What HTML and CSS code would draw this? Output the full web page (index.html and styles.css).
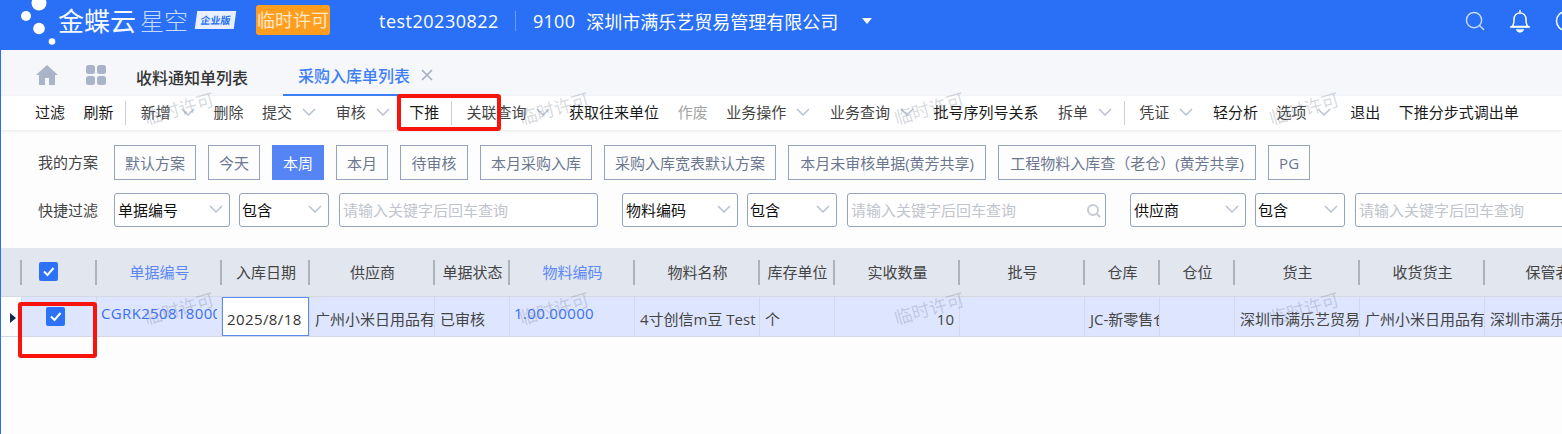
FILE: index.html
```html
<!DOCTYPE html>
<html lang="zh-CN">
<head>
<meta charset="utf-8">
<title>采购入库单列表</title>
<link rel="stylesheet" href="styles.css">
</head>
<body>
<div class="page">
  <header class="topbar">
    <svg class="logo-dots" width="58" height="50" viewBox="0 0 58 50"><circle cx="39" cy="3" r="7.5" fill="#fff"/><circle cx="26" cy="16" r="5" fill="#fff"/><circle cx="39" cy="28.500" r="5.800" fill="#fff"/><circle cx="52" cy="41.500" r="3.300" fill="#fff"/></svg>
    <span class="brand">金蝶云</span>
    <span class="brand-sub">星空</span>
    <span class="edition">企业版</span>
    <span class="license">临时许可</span>
    <span class="user">test20230822</span>
    <span class="top-sep"></span>
    <span class="org-code">9100</span>
    <span class="org-name">深圳市满乐艺贸易管理有限公司</span>
    <svg class="org-caret" width="10" height="6" viewBox="0 0 10 6"><path d="M0 0h10L5 6z" fill="#fff"/></svg>
    <span class="top-actions">
      <svg width="20" height="20" viewBox="0 0 21 21" fill="none" stroke="#c9dcff" stroke-width="1.500"><circle cx="9.500" cy="9.500" r="8"/><path d="M15.500 15.500l4 4" stroke-linecap="round"/></svg>
      <svg width="22" height="24" viewBox="0 0 22 24" fill="none" stroke="#fff" stroke-width="1.500"><path d="M3 17.500c2-2 2-4 2-7 0-4 2.500-6.500 6-6.500s6 2.500 6 6.500c0 3 0 5 2 7z" stroke-linejoin="round"/><path d="M1.500 18h19" stroke-linecap="round"/><path d="M11 1v2.500"/><path d="M8 21h6c-1 2.500-5 2.500-6 0z" fill="#fff"/></svg>
      <svg width="22" height="22" viewBox="0 0 22 22" fill="none" stroke="#fff" stroke-width="1.500"><circle cx="11" cy="11" r="9.500"/><path d="M8 8.500c0-4 6-4 6 0 0 2.500-3 2.500-3 5" stroke-linecap="round"/><circle cx="11" cy="16.500" r=".8" fill="#fff"/></svg>
    </span>
  </header>

  <main class="main">
    <nav class="tabs">
      <svg class="tab-icon" width="22" height="20" viewBox="0 0 22 20"><path d="M11 0L0 10h3v10h6v-7h4v7h6V10h3z" fill="#aab4c9"/></svg>
      <svg class="tab-icon grid-icon" width="20" height="20" viewBox="0 0 20 20" fill="#aab4c9"><rect width="9" height="9" rx="2.500"/><rect x="11" width="9" height="9" rx="2.500"/><rect y="11" width="9" height="9" rx="2.500"/><rect x="11" y="11" width="9" height="9" rx="2.500"/></svg>
      <span class="tab">收料通知单列表</span>
      <span class="tab tab-active">采购入库单列表
        <svg class="tab-close" width="12" height="12" viewBox="0 0 12 12" stroke="#a3aec4" stroke-width="1.600"><path d="M1 1l10 10M11 1L1 11"/></svg>
      </span>
    </nav>

    <div class="toolbar">
      <span class="tool">过滤</span>
      <span class="tool">刷新</span>
      <span class="tool-sep"></span>
      <span class="tool tool-menu">新增<svg class="chev" viewBox="0 0 14 8"><path d="M1 1l6 6 6-6"/></svg></span>
      <span class="tool tool-soft tool-tight">删除</span>
      <span class="tool tool-menu">提交<svg class="chev" viewBox="0 0 14 8"><path d="M1 1l6 6 6-6"/></svg></span>
      <span class="tool tool-menu">审核<svg class="chev" viewBox="0 0 14 8"><path d="M1 1l6 6 6-6"/></svg></span>
      <span class="tool">下推</span>
      <span class="tool-sep"></span>
      <span class="tool tool-menu">关联查询<svg class="chev" viewBox="0 0 14 8"><path d="M1 1l6 6 6-6"/></svg></span>
      <span class="tool tool-tight">获取往来单位</span>
      <span class="tool tool-off">作废</span>
      <span class="tool tool-menu">业务操作<svg class="chev" viewBox="0 0 14 8"><path d="M1 1l6 6 6-6"/></svg></span>
      <span class="tool tool-menu">业务查询<svg class="chev" viewBox="0 0 14 8"><path d="M1 1l6 6 6-6"/></svg></span>
      <span class="tool">批号序列号关系</span>
      <span class="tool tool-menu tool-wide">拆单<svg class="chev" viewBox="0 0 14 8"><path d="M1 1l6 6 6-6"/></svg></span>
      <span class="tool-sep"></span>
      <span class="tool tool-menu">凭证<svg class="chev" viewBox="0 0 14 8"><path d="M1 1l6 6 6-6"/></svg></span>
      <span class="tool">轻分析</span>
      <span class="tool tool-menu">选项<svg class="chev" viewBox="0 0 14 8"><path d="M1 1l6 6 6-6"/></svg></span>
      <span class="tool">退出</span>
      <span class="tool">下推分步式调出单</span>
    </div>

    <section class="filters">
      <div class="filter-row scheme-row">
        <span class="filter-label">我的方案</span>
        <span class="chip">默认方案</span>
        <span class="chip">今天</span>
        <span class="chip chip-active">本周</span>
        <span class="chip">本月</span>
        <span class="chip chip-68">待审核</span>
        <span class="chip">本月采购入库</span>
        <span class="chip">采购入库宽表默认方案</span>
        <span class="chip chip-198">本月未审核单据(黄芳共享)</span>
        <span class="chip chip-258">工程物料入库查（老仓）(黄芳共享)</span>
        <span class="chip chip-42">PG</span>
      </div>
      <div class="filter-row quick-row">
        <span class="filter-label">快捷过滤</span>
        <span class="field field-key">单据编号<svg class="chev" viewBox="0 0 14 8"><path d="M1 1l6 6 6-6"/></svg></span>
        <span class="field field-op">包含<svg class="chev" viewBox="0 0 14 8"><path d="M1 1l6 6 6-6"/></svg></span>
        <span class="field field-text">请输入关键字后回车查询</span>
        <span class="field field-key">物料编码<svg class="chev" viewBox="0 0 14 8"><path d="M1 1l6 6 6-6"/></svg></span>
        <span class="field field-op">包含<svg class="chev" viewBox="0 0 14 8"><path d="M1 1l6 6 6-6"/></svg></span>
        <span class="field field-text">请输入关键字后回车查询<svg class="field-search" width="14" height="14" viewBox="0 0 14 14" fill="none" stroke="#c5cad6" stroke-width="2"><circle cx="6" cy="6" r="5"/><path d="M9.500 9.500l3.500 3.500"/></svg></span>
        <span class="field field-key">供应商<svg class="chev" viewBox="0 0 14 8"><path d="M1 1l6 6 6-6"/></svg></span>
        <span class="field field-op">包含<svg class="chev" viewBox="0 0 14 8"><path d="M1 1l6 6 6-6"/></svg></span>
        <span class="field field-text field-last">请输入关键字后回车查询</span>
      </div>
    </section>

    <div class="grid-head">
      <span></span>
      <span class="th th-check"><span class="check"><svg viewBox="0 0 19 19"><path d="M5 9.500l3.500 3.500L14.500 6"/></svg></span></span>
      <span class="th th-link">单据编号</span>
      <span class="th">入库日期</span>
      <span class="th">供应商</span>
      <span class="th">单据状态</span>
      <span class="th th-link">物料编码</span>
      <span class="th">物料名称</span>
      <span class="th">库存单位</span>
      <span class="th">实收数量</span>
      <span class="th">批号</span>
      <span class="th">仓库</span>
      <span class="th">仓位</span>
      <span class="th">货主</span>
      <span class="th">收货货主</span>
      <span class="th">保管者</span>
    </div>
    <div class="grid-row">
      <span class="row-mark"><svg width="6" height="10" viewBox="0 0 6 10"><path d="M0 0l6 5-6 5z" fill="#14284f"/></svg></span>
      <span class="td td-check"><span class="check"><svg viewBox="0 0 19 19"><path d="M5 9.500l3.500 3.500L14.500 6"/></svg></span></span>
      <span class="td td-link"><span class="td-clip">CGRK2508180001</span></span>
      <span class="td td-edit"><span class="date-box">2025/8/18</span></span>
      <span class="td">广州小米日用品有限公司</span>
      <span class="td">已审核</span>
      <span class="td td-link"><span class="td-clip">1.00.00000</span></span>
      <span class="td">4寸创信m豆 Test</span>
      <span class="td">个</span>
      <span class="td td-num">10</span>
      <span class="td"></span>
      <span class="td">JC-新零售仓</span>
      <span class="td"></span>
      <span class="td">深圳市满乐艺贸易管理</span>
      <span class="td">广州小米日用品有限公司</span>
      <span class="td">深圳市满乐艺贸易</span>
    </div>
  </main>

  <div class="watermarks">
    <span>临时许可</span><span>临时许可</span><span>临时许可</span><span>临时许可</span>
    <span>临时许可</span><span>临时许可</span><span>临时许可</span><span>临时许可</span>
  </div>
  <div class="mark mark-push"></div>
  <div class="mark mark-check"></div>
</div>
</body>
</html>
```
FILE: styles.css
```css
* { box-sizing: border-box; }
html, body { margin: 0; padding: 0; }
body {
  font-family: "Open Sans", "Noto Sans CJK SC", sans-serif;
  font-size: 15px;
  color: #333;
  background: #fdfdfe;
}
.page { position: relative; width: 1562px; height: 434px; overflow: hidden; }

/* top bar */
.topbar { height: 50px; background: #2970f6; display: flex; align-items: center; color: #fff; overflow: hidden; white-space: nowrap; }
.topbar > * { flex: none; }
.brand { font-size: 26px; font-weight: 400; line-height: 1; margin-top: -9px; color: #f4f8ff; }
.brand-sub { font-size: 24px; font-weight: 300; line-height: 1; margin: -9px 0 0 4px; color: #c7dafd; }
.edition { width: 39px; height: 18px; margin: -10px 0 0 8px; background: #e8f0ff; color: #2970f6; font-size: 10px; font-weight: 700; line-height: 18px; text-align: center; transform: skewX(-8deg); }
.license { width: 74px; height: 30px; margin: -10px 0 0 21px; background: #ff9d1e; color: #ffe8c8; border-radius: 3px; font-size: 18px; line-height: 30px; text-align: center; }
.user { font-size: 18px; margin: -8px 0 0 49px; letter-spacing: .5px; }
.top-sep { width: 1px; height: 20px; margin: -8px 0 0 16px; background: #6c9df8; }
.org-code { font-size: 18px; margin: -8px 0 0 17px; letter-spacing: .3px; }
.org-name { font-size: 18px; margin: -8px 0 0 11px; }
.org-caret { margin: -9px 0 0 24px; }
.top-actions { display: flex; align-items: center; gap: 24px; margin: -9px 0 0 593px; }

/* main */
.main { border-left: 1px solid #2970f6; height: 384px; }
.tabs { height: 46px; background: #f5f7fb; display: flex; align-items: center; padding: 6px 0 0 35px; }
.tab-icon { flex: none; margin-top: -2px; }
.grid-icon { margin-left: 28px; }
.tab { font-size: 16px; font-weight: 500; color: #333; margin-left: 30px; padding-top: 2px; }
.tab-active { color: #3f7ff5; margin-left: 35px; height: 40px; line-height: 40px; padding: 2px 12px 0 15px; border-bottom: 2px solid #3f7ff5; display: flex; align-items: center; gap: 11px; width: 165px; }
.tab-close { flex: none; margin-top: -3px; }

.toolbar { height: 34px; background: #fff; display: flex; align-items: center; gap: 18.600px; padding: 0 0 2px 34px; color: #111; box-shadow: 0 1px 3px rgba(60, 70, 90, .12); position: relative; white-space: nowrap; }
.tool { flex: none; line-height: 20px; color: #1a1a1a; }
.tool-menu { display: flex; align-items: center; gap: 10px; padding-right: 1px; color: #444; }
.tool-soft { color: #444; }
.tool-off { color: #a4a4a4; }
.tool-tight { margin-left: -1px; }
.tool-wide { margin: 0 -1px 0 1px; }
.tool-sep { width: 1px; height: 24px; background: #c8cfdc; flex: none; margin: 2px -4px 0 -7px; }
.chev { width: 14px; height: 8px; fill: none; stroke: #b9c1d2; stroke-width: 1.500; flex: none; }

/* filters */
.filters { padding: 15px 0 21px 37px; }
.filter-row { display: flex; align-items: center; white-space: nowrap; }
.scheme-row { height: 35px; gap: 12px; margin-bottom: 13px; }
.quick-row { height: 34px; }
.filter-label { width: 64px; flex: none; color: #444; padding-bottom: 2px; }
.quick-row .filter-label { width: 76px; }
.chip { height: 35px; padding: 0 10px; border: 1px solid #95a3bd; color: #6b778f; line-height: 34px; flex: none; text-align: center; }
.chip-active { background: #5585f5; border-color: #5585f5; color: #fff; width: 52px; }
.chip-68 { width: 68px; }
.chip-198 { width: 198px; }
.chip-258 { width: 258px; }
.chip-42 { width: 42px; }
.field { height: 34px; flex: none; border: 1px solid #95a3bd; border-radius: 3px; display: flex; align-items: center; justify-content: space-between; padding: 0 6px 2px 3px; color: #111; background: #fff; }
.field-key { width: 116px; margin-right: 9px; }
.field-op { width: 90px; margin-right: 10px; padding-left: 2px; }
.field-text { width: 259px; margin-right: 24px; color: #c0c4cc; padding: 0 4px 1px 3px; }
.field-search { flex: none; margin-top: 2px; }
.field-last { margin-right: 0; }

/* grid */
.grid-head, .grid-row { display: grid; }
.grid-head { grid-template-columns: 19px 75px 125px 88px 125px 75px 125px 125px 75px 125px 125px 75px 75px 125px 125px 126px; height: 49px; background: #e2e6ef; align-items: center; border-bottom: 1px solid #d5d9e3; }
.grid-row { grid-template-columns: 20px 75px 125px 88px 125px 75px 125px 125px 75px 125px 125px 75px 75px 125px 125px 125px; height: 40px; border-bottom: 1px solid #d5d9e3; }
.th { height: 25px; border-left: 2px solid #aeb2bb; display: flex; align-items: center; justify-content: center; color: #444; white-space: nowrap; overflow: hidden; padding: 0 0 1px 2px; }
.th-link { color: #5b88f5; }
.th-check { justify-content: flex-start; padding-left: 17px; }
.row-mark { display: flex; align-items: center; padding: 2px 0 0 9px; background: #fdfdfe; }
.td { background: #dee6ff; border-left: 1px solid #d3d9e8; padding: 6px 0 0 5px; line-height: 33px; color: #444; white-space: nowrap; overflow: hidden; }
.td-link { color: #3b6ff5; padding: 0 4px; letter-spacing: .35px; }
.td-clip { display: block; overflow: hidden; }
.td-num { text-align: right; padding-right: 5px; }
.td-check { padding: 10px 0 0 24px; line-height: 0; }
.td-edit { padding: 0; }
.date-box { display: block; height: 39px; background: #fff; border: 1px solid #5d8cf0; padding-left: 4px; line-height: 43px; color: #333; letter-spacing: .4px; }
.check { display: block; width: 19px; height: 19px; background: #2d72f6; border-radius: 2px; flex: none; }
.check svg { display: block; fill: none; stroke: #fff; stroke-width: 2; }

/* overlays */
.watermarks { position: absolute; left: 143px; top: 90px; display: grid; grid-template-columns: repeat(4, 375px); grid-auto-rows: 200px; pointer-events: none; }
.watermarks span { width: 75px; height: 36px; line-height: 36px; font-size: 18px; color: rgba(110, 120, 140, .28); transform: rotate(-16deg); white-space: nowrap; }
.mark { position: absolute; border: 4px solid #f8140c; border-radius: 3px; pointer-events: none; }
.mark-push { left: 397px; top: 94px; width: 104px; height: 37px; }
.mark-check { left: 18px; top: 302px; width: 79px; height: 56px; }
```
